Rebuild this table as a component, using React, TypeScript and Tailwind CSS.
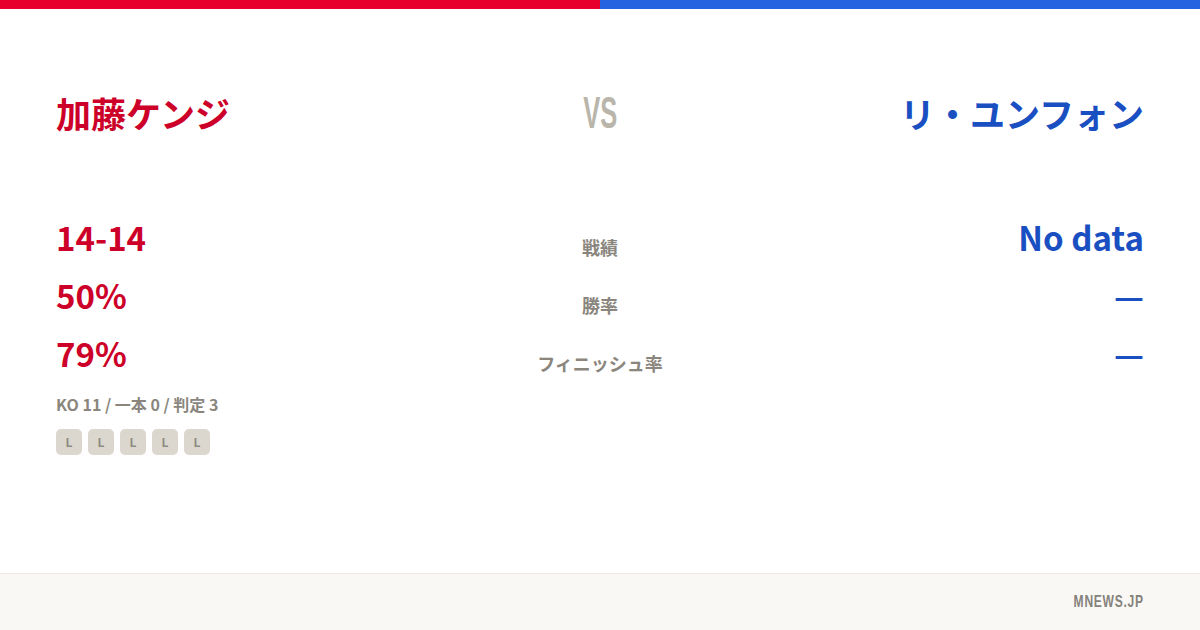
const jp = "font-['Noto_Sans_CJK_JP','Noto_Sans',sans-serif]";

const rows = [
  { left: "14-14", label: "戦績", right: "No data" },
  { left: "50%", label: "勝率", right: "—" },
  { left: "79%", label: "フィニッシュ率", right: "—" },
];

export default function App() {
  return (
    <div className={`w-[1200px] h-[630px] flex flex-col bg-white ${jp}`}>
      {/* corner colours */}
      <div className="flex h-[9px]">
        <div className="flex-1 bg-[#e8002d]" />
        <div className="flex-1 bg-[#2563e0]" />
      </div>

      <main className="flex-1 px-14 pt-[82px]">
        {/* names */}
        <div className="grid grid-cols-[1fr_auto_1fr] items-center">
          <div className="text-[35px] leading-[44px] font-bold text-[#cc0028]">加藤ケンジ</div>
          <div className="w-[40px] flex justify-center">
            <span className="inline-block font-['Liberation_Sans',sans-serif] font-bold text-[44px] leading-[44px] text-[#b9b5ab] scale-x-[0.58]">
              VS
            </span>
          </div>
          <div className="text-right text-[35px] leading-[44px] font-bold text-[#1a4fc2]">リ・ユンフォン</div>
        </div>

        {/* stats */}
        <div className="mt-[82px] flex flex-col">
          {rows.map((r) => (
            <div key={r.label} className="grid grid-cols-[1fr_auto_1fr] items-baseline h-[58px]">
              <div className="text-[33px] leading-[40px] font-bold text-[#cc0028]">{r.left}</div>
              <div className="translate-y-[4px] text-[18px] font-bold text-[#8a867d] text-center w-[140px]">{r.label}</div>
              <div className="text-right text-[33px] leading-[40px] font-bold text-[#1a4fc2]">{r.right}</div>
            </div>
          ))}
        </div>

        <div className="mt-[2px] text-[16px] leading-[22px] font-bold text-[#8a867d]">KO 11 / 一本 0 / 判定 3</div>
        <div className="mt-[14px] flex gap-[6px]">
          {["L", "L", "L", "L", "L"].map((x, i) => (
            <span
              key={i}
              className="w-[26px] h-[26px] rounded-[5px] bg-[#dbd7ce] text-[#8f8b82] text-[12px] font-bold flex items-center justify-center"
            >
              {x}
            </span>
          ))}
        </div>
      </main>

      <footer className="h-[57px] border-t border-[#ebe8e2] bg-[#f9f8f5] flex items-center justify-end px-14">
        <span className="inline-block origin-right scale-x-[0.71] font-['Liberation_Sans',sans-serif] font-bold text-[17px] tracking-[1px] text-[#86837c]">
          MNEWS.JP
        </span>
      </footer>
    </div>
  );
}
